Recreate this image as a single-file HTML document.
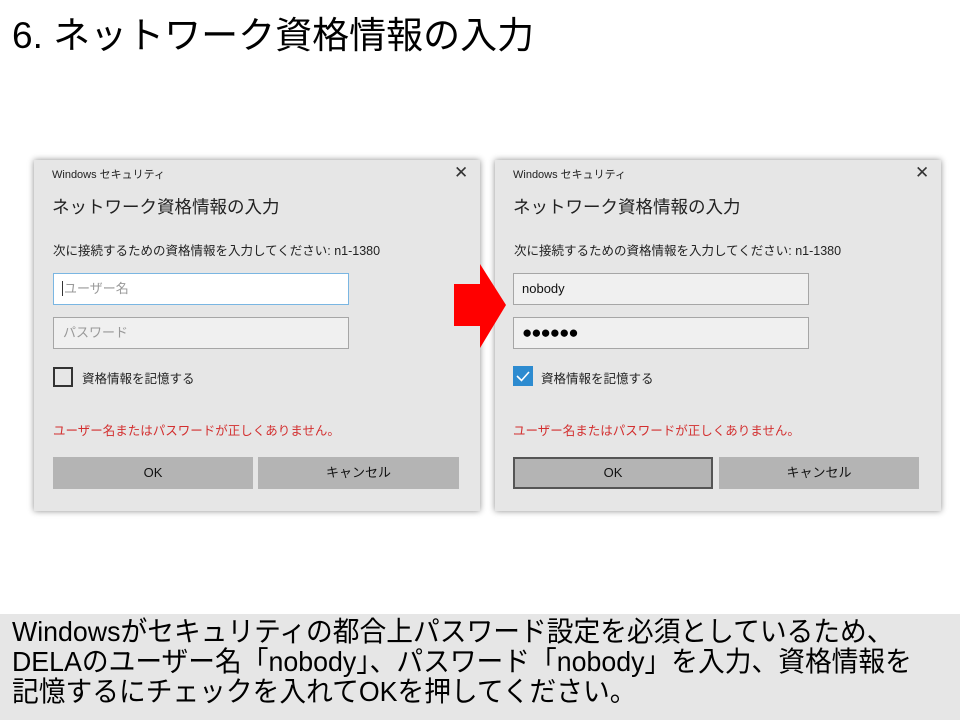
<!DOCTYPE html>
<html><head><meta charset="utf-8"><style>
body{margin:0;width:960px;height:720px;background:#fff;position:relative;overflow:hidden;font-family:"Liberation Sans","Noto Sans CJK JP",sans-serif;}
.a{position:absolute;white-space:nowrap;}
.dlg{position:absolute;top:160px;width:446px;height:351px;background:#e6e6e6;box-shadow:0 0 6px rgba(0,0,0,.45);}
.in{position:absolute;left:19px;width:294px;height:30px;border:1px solid #a6a6a6;background:#f0f0f0;box-sizing:content-box;font-size:13px;line-height:30px;padding-left:0;}
.btn{position:absolute;top:297px;height:32px;width:200px;background:#b4b4b4;font-size:13px;text-align:center;line-height:32px;color:#111;}
</style></head><body>
<div class="a" style="left:12px;top:12px;font-size:37px;line-height:48px;color:#000;">6. ネットワーク資格情報の入力</div>

<!-- dialog 1 -->
<div class="dlg" style="left:34px;">
<div class="a" style="left:18px;top:6px;font-size:11px;color:#222;">Windows セキュリティ</div>
<div class="a" style="left:420px;top:3px;font-size:17px;color:#333;">✕</div>
<div class="a" style="left:18px;top:34px;font-size:17.5px;color:#222;">ネットワーク資格情報の入力</div>
<div class="a" style="left:19px;top:80px;font-size:12.5px;color:#222;">次に接続するための資格情報を入力してください: n1-1380</div>
<div class="in" style="top:113px;background:#fff;border-color:#7ab6e2;"><span style="color:#999;border-left:1px solid #333;margin-left:8px;padding-left:1px;">ユーザー名</span></div>
<div class="in" style="top:157px;"><span style="color:#999;padding-left:9px;">パスワード</span></div>
<div class="a" style="left:19px;top:207px;width:16px;height:16px;border:2px solid #333;"></div>
<div class="a" style="left:48px;top:208px;font-size:12.5px;color:#222;">資格情報を記憶する</div>
<div class="a" style="left:19px;top:260px;font-size:12.5px;color:#d32f2f;">ユーザー名またはパスワードが正しくありません。</div>
<div class="btn" style="left:19px;">OK</div>
<div class="btn" style="left:224px;width:201px;">キャンセル</div>
</div>

<!-- dialog 2 -->
<div class="dlg" style="left:495px;">
<div class="a" style="left:18px;top:6px;font-size:11px;color:#222;">Windows セキュリティ</div>
<div class="a" style="left:420px;top:3px;font-size:17px;color:#333;">✕</div>
<div class="a" style="left:18px;top:34px;font-size:17.5px;color:#222;">ネットワーク資格情報の入力</div>
<div class="a" style="left:19px;top:80px;font-size:12.5px;color:#222;">次に接続するための資格情報を入力してください: n1-1380</div>
<div class="in" style="top:113px;left:18px;"><span style="color:#111;padding-left:8px;">nobody</span></div>
<div class="in" style="top:157px;left:18px;"><span style="color:#000;padding-left:8px;font-size:17px;letter-spacing:-1px;">●●●●●●</span></div>
<div class="a" style="left:18px;top:206px;width:20px;height:20px;background:#2d8bd0;"><svg width="20" height="20"><path d="M4 10 L8.5 14.5 L16 6" stroke="#fff" stroke-width="1.6" fill="none"/></svg></div>
<div class="a" style="left:46px;top:208px;font-size:12.5px;color:#222;">資格情報を記憶する</div>
<div class="a" style="left:18px;top:260px;font-size:12.5px;color:#d32f2f;">ユーザー名またはパスワードが正しくありません。</div>
<div class="btn" style="left:18px;width:196px;height:28px;line-height:28px;border:2px solid #555;">OK</div>
<div class="btn" style="left:224px;width:200px;">キャンセル</div>
</div>

<!-- arrow -->
<svg class="a" style="left:450px;top:262px;z-index:5;" width="60" height="88"><polygon points="4,22 30,22 30,2 56,43 30,86 30,64 4,64" fill="#ff0000"/></svg>

<!-- caption -->
<div class="a" style="left:0;top:614px;width:960px;height:106px;background:#e6e6e6;"></div>
<div class="a" style="left:12px;top:617px;font-size:28px;line-height:30px;color:#000;transform:scaleX(0.955);transform-origin:left top;">Windowsがセキュリティの都合上パスワード設定を必須としているため、<br>DELAのユーザー名「nobody」、パスワード「nobody」を入力、資格情報を<br>記憶するにチェックを入れてOKを押してください。</div>
</body></html>
